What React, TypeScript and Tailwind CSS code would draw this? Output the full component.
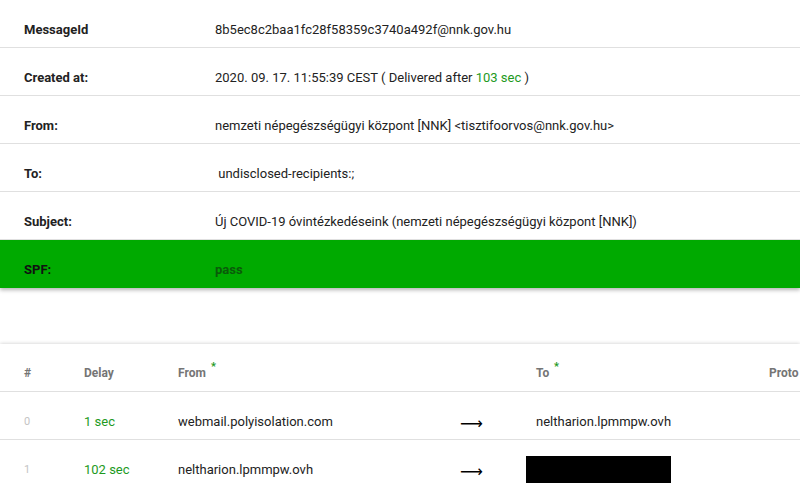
import React from "react";

const info = [
  { label: "MessageId", value: "8b5ec8c2baa1fc28f58359c3740a492f@nnk.gov.hu" },
  { label: "Created at:", value: "created" },
  { label: "From:", value: "nemzeti népegészségügyi központ [NNK] <tisztifoorvos@nnk.gov.hu>" },
  { label: "To:", value: " undisclosed-recipients:;" },
  { label: "Subject:", value: "Új COVID-19 óvintézkedéseink (nemzeti népegészségügyi központ [NNK])" },
];

const hops = [
  { idx: 0, delay: "1 sec", from: "webmail.polyisolation.com", to: "neltharion.lpmmpw.ovh" },
  { idx: 1, delay: "102 sec", from: "neltharion.lpmmpw.ovh", to: null },
];

function InfoRow({ label, children }: { label: string; children: React.ReactNode }) {
  return (
    <div className="flex h-[48px] border-b border-[#e0e0e0] pl-6 pt-[21px] text-[13px] leading-[18px]">
      <div className="w-[191px] font-bold text-[#222]">{label}</div>
      <div className="text-[#222] whitespace-pre">{children}</div>
    </div>
  );
}

export default function App() {
  return (
    <div className="h-[487px] w-[800px] overflow-hidden bg-white font-['Roboto',sans-serif]">
      <div className="shadow-[0_2px_4px_rgba(0,0,0,0.3)]">
        {info.map((row) => (
          <InfoRow key={row.label} label={row.label}>
            {row.value === "created" ? (
              <>
                2020. 09. 17. 11:55:39 CEST ( Delivered after{" "}
                <span className="text-[#1e9a1e]">103 sec</span> )
              </>
            ) : (
              row.value
            )}
          </InfoRow>
        ))}
        <div className="flex h-[48px] bg-[#00aa00] pl-6 pt-[21px] text-[13px] leading-[18px]">
          <div className="w-[191px] font-bold text-[#111]">SPF:</div>
          <div className="font-bold text-[#0a5a0a]">pass</div>
        </div>
      </div>

      <div className="mt-[56px] bg-white shadow-[0_0_4px_rgba(0,0,0,0.22)]">
        <div className="grid h-[48px] grid-cols-[60px_94px_270px_88px_233px_1fr] items-start border-b border-[#e0e0e0] pl-6 pt-5 text-[12px] font-bold leading-[18px] text-[#757575]">
          <div>#</div>
          <div>Delay</div>
          <div className="relative">
            From
            <span className="absolute left-[33px] top-[-6px] text-[11px] text-[#1e9a1e]">*</span>
          </div>
          <div />
          <div className="relative">
            To
            <span className="absolute left-[18px] top-[-6px] text-[11px] text-[#1e9a1e]">*</span>
          </div>
          <div className="whitespace-nowrap">Proto</div>
        </div>
        {hops.map((h) => (
          <div
            key={h.idx}
            className="grid h-[48px] grid-cols-[60px_94px_270px_88px_233px_1fr] items-start border-b border-[#e0e0e0] pl-6 pt-[21px] text-[13px] leading-[18px] text-[#222]"
          >
            <div className="text-[11px] text-[#c4c4c4]">{h.idx}</div>
            <div className="text-[#1e9a1e]">{h.delay}</div>
            <div>{h.from}</div>
            <div className="pl-3 pt-[2px] text-[16px] leading-[18px] text-black font-['DejaVu_Sans',sans-serif]">⟶</div>
            <div>
              {h.to ? h.to : <div className="ml-[-10px] mt-[-5px] h-[27px] w-[145px] bg-black" />}
            </div>
            <div />
          </div>
        ))}
      </div>
    </div>
  );
}
